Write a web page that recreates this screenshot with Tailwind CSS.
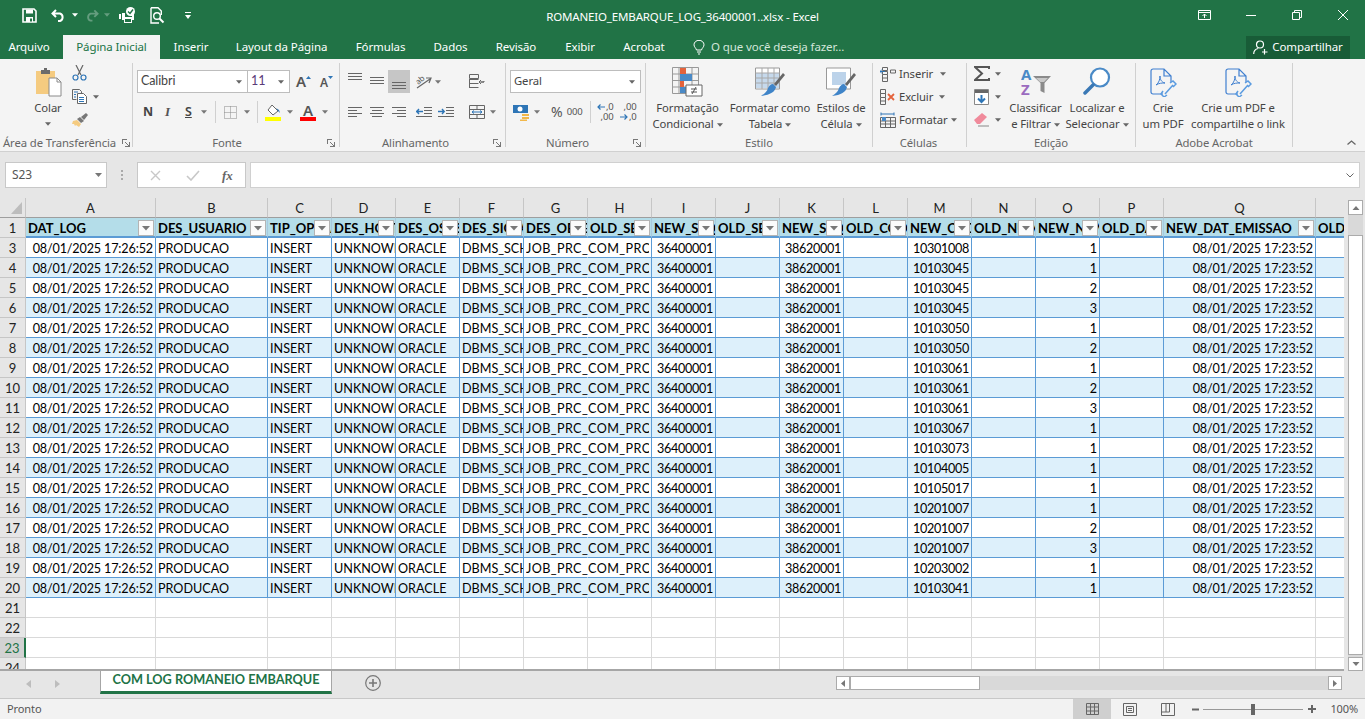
<!DOCTYPE html>
<html lang="pt-BR">
<head>
<meta charset="utf-8">
<title>ROMANEIO_EMBARQUE_LOG_36400001..xlsx - Excel</title>
<script src="https://cdn.jsdelivr.net/npm/@tailwindcss/browser@4"></script>
</head>
<body class="w-[1365px] h-[719px] overflow-hidden bg-[#e6e6e6] font-['Noto_Sans',sans-serif] text-[11.3px] tracking-[-0.1px] text-[#444]">
<svg class="hidden"><symbol id="c" viewBox="0 0 7 4"><path d="M0 0h7L3.5 4z"/></symbol><symbol id="l" viewBox="0 0 8 8"><path d="M0 .5h5M.5 0v5M7.5 3v5M3 7.5h5M3 3l4 4" fill="none" stroke="#777"/></symbol><symbol id="f" viewBox="0 0 16 16"><rect x=".5" y=".5" width="15" height="15" fill="#fbfbfb" stroke="#b4b4b4"/><path d="M4 6h8l-4 4.500z" fill="#777"/></symbol></svg>

<!-- title bar -->
<header class="h-[59px] bg-[#217346] text-white flex flex-col">
  <div class="h-[35px] grid grid-cols-[1fr_auto_1fr] items-center">
    <div class="flex items-center pl-[22px] pb-[5px]">
      <svg class="w-[15px] h-[15px]" viewBox="0 0 15 15"><path d="M1 1h11l2 2v11H1z" fill="none" stroke="#fff" stroke-width="1.6"/><path d="M4 1.500h7v4H4zM4 9h7v5H4z" fill="#fff"/><path d="M8 10.500h2v3H8z" fill="#217346"/></svg>
      <svg class="w-[16px] h-[13px] ml-[14px]" viewBox="0 0 16 13"><path d="M5 1 1.500 4.500 5 8M2 4.500h7a4 4 0 0 1 0 7.500H7" fill="none" stroke="#fff" stroke-width="2"/></svg>
      <svg class="w-[6px] h-[4px] ml-[5px] fill-white"><use href="#c"/></svg>
      <svg class="w-[15px] h-[13px] ml-[6px] opacity-30" viewBox="0 0 16 13"><path d="M11 1l3.500 3.500L11 8M14 4.500H7a4 4 0 0 0 0 7.500h2" fill="none" stroke="#fff" stroke-width="2"/></svg>
      <svg class="w-[6px] h-[4px] ml-[5px] fill-white opacity-30"><use href="#c"/></svg>
      <svg class="w-[17px] h-[17px] ml-[9px]" viewBox="0 0 17 17"><path d="M3 6h3v3h6V6h3v7h-2v3H5v-3H3zM0 7h2v5H0z" fill="#fff"/><path d="M6 9h7v1H6zM6 12h6v3H6z" fill="#217346"/><circle cx="11.500" cy="4.500" r="4.500" fill="#fff"/><path d="M9 4.500l2 2 3-4" fill="none" stroke="#217346" stroke-width="1.400"/></svg>
      <svg class="w-[15px] h-[17px] ml-[14px]" viewBox="0 0 15 17"><path d="M1 .7h7l3.300 3.300v4M1 .7v15.300h8" fill="none" stroke="#fff" stroke-width="1.400"/><circle cx="7" cy="9" r="3.300" fill="none" stroke="#fff" stroke-width="1.400"/><path d="M9.500 11.500l4 4" stroke="#fff" stroke-width="2"/></svg>
      <svg class="w-[6px] h-[7px] ml-[20px]" viewBox="0 0 6 7"><path d="M0 0h6v1H0z" fill="#fff"/><path d="M0 3h6L3 7z" fill="#fff"/></svg>
    </div>
    <div class="text-[11.500px] tracking-[-0.15px] leading-none pb-[2px] whitespace-nowrap">ROMANEIO_EMBARQUE_LOG_36400001..xlsx - Excel</div>
    <div class="flex justify-end items-center pr-[17px] pb-[5px]">
      <svg class="w-[13px] h-[10px]" viewBox="0 0 13 10"><path d="M.5.500h12v9H.5zM.5 2.500h12" fill="none" stroke="#fff"/><path d="M6.500 8V4M4.500 6l2-2 2 2" fill="none" stroke="#fff"/></svg>
      <svg class="w-[10px] h-[10px] ml-[35px]" viewBox="0 0 10 10"><path d="M0 5.500h10" stroke="#fff"/></svg>
      <svg class="w-[10px] h-[10px] ml-[36px]" viewBox="0 0 10 10"><path d="M.5 2.500h7v7h-7zM2.500 2.500v-2h7v7h-2" fill="none" stroke="#fff"/></svg>
      <svg class="w-[10px] h-[10px] ml-[36px]" viewBox="0 0 10 10"><path d="M0 0l10 10M10 0L0 10" stroke="#fff"/></svg>
    </div>
  </div>
  <nav class="h-[24px] flex items-center text-[11.500px] text-center relative">
    <div class="w-[63px] pr-[5px] leading-[24px]">Arquivo</div>
    <div class="w-[97px] h-[24px] leading-[24px] bg-[#f3f3f3] text-[#217346]">Página Inicial</div>
    <div class="w-[62px]">Inserir</div>
    <div class="w-[119px]">Layout da Página</div>
    <div class="w-[79px]">Fórmulas</div>
    <div class="w-[61px]">Dados</div>
    <div class="w-[70px]">Revisão</div>
    <div class="w-[58px]">Exibir</div>
    <div class="w-[70px]">Acrobat</div>
    <svg class="w-[12px] h-[15px] ml-[14px]" viewBox="0 0 12 15"><path d="M3.500 10C3 8 1 7 1 4.800a5 4.500 0 0 1 10 0C11 7 9 8 8.500 10zM4 12h4M5 14h2" fill="none" stroke="#fff"/></svg>
    <div class="ml-[6px] text-[#d3e6da]">O que você deseja fazer...</div>
    <div class="ml-auto mr-[15px] w-[104px] h-[23px] bg-[#185c37] flex items-center justify-center gap-[4px]">
      <svg class="w-[15px] h-[15px]" viewBox="0 0 15 15"><circle cx="7" cy="4.500" r="3.500" fill="none" stroke="#fff" stroke-width="1.200"/><path d="M.7 14c0-3 2-5 4.500-5.500M11.500 9v5.500M9 12h5.500" fill="none" stroke="#fff" stroke-width="1.200"/></svg>
      <span>Compartilhar</span>
    </div>
  </nav>
</header>

<!-- ribbon -->
<section class="h-[93px] bg-[#f4f4f4] border-b border-[#d0d0d0] flex relative">
  <!-- Clipboard -->
  <div class="w-[132px] flex flex-col">
    <div class="flex-1 flex pl-[33px]">
      <div class="w-[30px] flex flex-col items-center pt-[8px]">
        <svg class="w-[30px] h-[30px]" viewBox="0 0 30 30"><path d="M3 4h19v23H3z" fill="#f5cb80"/><path d="M8 3h3V1h3v2h3v4H8z" fill="#6b6b6b"/><path d="M16 11h8l4 4v14H16z" fill="#fff" stroke="#8a8a8a"/><path d="M24 11v4h4" fill="none" stroke="#8a8a8a"/></svg>
        <div class="mt-[3px] leading-[16px]">Colar</div>
        <svg class="w-[6px] h-[4px] mt-[6px] fill-[#666]"><use href="#c"/></svg>
      </div>
      <div class="ml-[9px] flex flex-col pt-[6px]">
        <svg class="w-[15px] h-[16px]" viewBox="0 0 15 16"><path d="M4 0l5 10M11 0L6 10" stroke="#666" stroke-width="1.200"/><circle cx="3.500" cy="12.500" r="2.500" fill="none" stroke="#2e75b6" stroke-width="1.200"/><circle cx="11.500" cy="12.500" r="2.500" fill="none" stroke="#2e75b6" stroke-width="1.200"/></svg>
        <div class="flex items-center mt-[8px]">
          <svg class="w-[15px] h-[15px]" viewBox="0 0 15 15"><path d="M.5.500h7l2 2v2M.5.500v10h4" fill="none" stroke="#666"/><path d="M5.500 4.500h6l3 3v7h-9z" fill="#fff" stroke="#666"/><path d="M2 3h4M2 5.500h2M2 8h2M7 8.500h5M7 10.500h5M7 12.500h5" stroke="#2e75b6"/></svg>
          <svg class="w-[6px] h-[4px] ml-[6px] fill-[#666]"><use href="#c"/></svg>
        </div>
        <svg class="w-[16px] h-[15px] mt-[8px]" viewBox="0 0 16 15"><path d="M1 9l4-1 4 4-2 3-3-2-1 1-1-2H0z" fill="#f5cb80"/><path d="M5 7l3-2 4 4-3 2z" fill="#777"/><path d="M9 5l5-4 2 2-4 5z" fill="#777"/></svg>
      </div>
    </div>
    <div class="h-[17px] leading-[18px] flex text-[#666] pl-[3px] whitespace-nowrap">Área de Transferência<svg class="w-[8px] h-[8px] ml-[6px] mt-[5px]"><use href="#l"/></svg></div>
  </div>
  <div class="w-px h-[84px] mt-[4px] bg-[#d0d0d0]"></div>
  <!-- Font -->
  <div class="w-[206px] flex flex-col">
    <div class="flex-1 pl-[4px] pt-[11px]">
      <div class="flex items-center">
        <div class="w-[111px] h-[23px] bg-white border border-[#bdbdbd] flex items-center pl-[3px] font-['Lato',sans-serif] text-[12.500px] text-[#444]">Calibri<svg class="w-[6px] h-[4px] ml-auto mr-[5px] fill-[#666]"><use href="#c"/></svg></div>
        <div class="w-[42px] h-[23px] bg-white border border-[#bdbdbd] border-l-0 flex items-center pl-[3px] font-['Lato',sans-serif] text-[12.500px] text-[#5a3a78]">11<svg class="w-[6px] h-[4px] ml-auto mr-[5px] fill-[#666]"><use href="#c"/></svg></div>
        <div class="ml-[6px] flex items-start w-[16px] text-[15px] leading-none text-[#555] font-semibold">A<svg class="w-[5px] h-[3px] mt-[2px] fill-[#2e75b6] rotate-180"><use href="#c"/></svg></div>
        <div class="ml-[8px] flex items-start w-[14px] text-[12px] leading-none text-[#555] font-semibold pt-[3px]">A<svg class="w-[5px] h-[3px] -mt-[1px] fill-[#2e75b6]"><use href="#c"/></svg></div>
      </div>
      <div class="flex items-center mt-[7px] h-[24px]">
        <span class="ml-[6px] w-[10px] font-bold text-[12.500px] text-[#444]">N</span>
        <span class="ml-[12px] w-[8px] italic text-[13px] font-['Liberation_Serif',serif] font-bold text-[#555]">I</span>
        <span class="ml-[12px] w-[10px] underline text-[12.500px] font-semibold text-[#444]">S</span>
        <svg class="w-[6px] h-[4px] ml-[6px] fill-[#777]"><use href="#c"/></svg>
        <div class="w-px h-[22px] bg-[#d0d0d0] ml-[8px]"></div>
        <svg class="w-[13px] h-[13px] ml-[8px]" viewBox="0 0 13 13"><path d="M.5.500h12v12H.5zM6.500.500v12M.5 6.500h12" fill="none" stroke="#888" stroke-dasharray="1 1"/></svg>
        <svg class="w-[6px] h-[4px] ml-[7px] fill-[#777]"><use href="#c"/></svg>
        <div class="w-px h-[22px] bg-[#d0d0d0] ml-[7px]"></div>
        <svg class="w-[16px] h-[17px] ml-[7px]" viewBox="0 0 16 17"><path d="M7 1l6 6-5 4-5-5z" fill="#fff" stroke="#666"/><path d="M11 4l3 2 1 3-2-2z" fill="#2e75b6"/><path d="M0 13h16v4H0z" fill="#ffff00"/></svg>
        <svg class="w-[6px] h-[4px] ml-[6px] fill-[#777]"><use href="#c"/></svg>
        <div class="ml-[7px] w-[16px] flex flex-col items-center leading-[13px] text-[15px] font-semibold text-[#555]">A<div class="w-[16px] h-[4px] bg-[#ff0000]"></div></div>
        <svg class="w-[6px] h-[4px] ml-[6px] fill-[#777]"><use href="#c"/></svg>
      </div>
    </div>
    <div class="h-[17px] leading-[18px] text-[#666] relative text-center pr-[18px]">Fonte<svg class="absolute right-[4px] top-[5px] w-[8px] h-[8px]"><use href="#l"/></svg></div>
  </div>
  <div class="w-px h-[84px] mt-[4px] bg-[#d0d0d0]"></div>
  <!-- Align -->
  <div class="w-[165px] flex flex-col">
    <div class="flex-1 pl-[8px] pt-[11px] relative">
      <div class="flex items-center h-[23px]">
        <svg class="w-[14px] h-[9px] mb-[8px]" viewBox="0 0 14 9"><path d="M0 .5h14M0 3.500h14M0 6.500h14" stroke="#666"/></svg>
        <svg class="w-[14px] h-[9px] ml-[8px]" viewBox="0 0 14 9"><path d="M0 .5h14M0 3.500h14M0 6.500h14" stroke="#666"/></svg>
        <div class="w-[22px] h-[23px] bg-[#c6c6c6] ml-[4px] flex items-end justify-center pb-[3px]"><svg class="w-[14px] h-[9px]" viewBox="0 0 14 9"><path d="M0 1.500h14M0 4.500h14M0 7.500h14" stroke="#666"/></svg></div>
        <svg class="w-[16px] h-[15px] ml-[6px]" viewBox="0 0 16 15"><path d="M1 14L14 5M10 4l5 0-2 5" fill="none" stroke="#666" stroke-width="1.200"/><text x="0" y="9" font-size="8" fill="#555" transform="rotate(-40 4 7)">ab</text></svg>
        <svg class="w-[6px] h-[4px] ml-[3px] fill-[#777]"><use href="#c"/></svg>
        <svg class="w-[16px] h-[15px] ml-[28px]" viewBox="0 0 16 15"><path d="M.5.500h9v4H.5zM.5 5.500h9M.5 9.500h9M.5 13.500h9M.5 5v9M12 8h3v-1M15 8h-4M12 6l-2 2 2 2" fill="none" stroke="#666"/></svg>
      </div>
      <div class="flex items-center mt-[7px] h-[24px]">
        <svg class="w-[14px] h-[11px]" viewBox="0 0 14 11"><path d="M0 .5h14M0 3.500h9M0 6.500h14M0 9.500h9" stroke="#666"/></svg>
        <svg class="w-[14px] h-[11px] ml-[8px]" viewBox="0 0 14 11"><path d="M0 .5h14M2 3.500h10M0 6.500h14M2 9.500h10" stroke="#666"/></svg>
        <svg class="w-[14px] h-[11px] ml-[8px]" viewBox="0 0 14 11"><path d="M0 .5h14M5 3.500h9M0 6.500h14M5 9.500h9" stroke="#666"/></svg>
        <svg class="w-[16px] h-[11px] ml-[10px]" viewBox="0 0 16 11"><path d="M8 .5h8M8 3.500h8M8 6.500h8M0 9.500h16" stroke="#666"/><path d="M0 4.500h7M3 2L.8 4.500 3 7" fill="none" stroke="#2e75b6" stroke-width="1.400"/></svg>
        <svg class="w-[16px] h-[11px] ml-[6px]" viewBox="0 0 16 11"><path d="M8 .5h8M8 3.500h8M8 6.500h8M0 9.500h16" stroke="#666"/><path d="M0 4.500h6M4 2l2.200 2.500L4 7" fill="none" stroke="#2e75b6" stroke-width="1.400"/></svg>
        <svg class="w-[16px] h-[14px] ml-[15px]" viewBox="0 0 16 14"><path d="M.5.500h15v13H.5zM.5 4.500h15M.5 9.500h15M8 .5v4M8 9.500v4" fill="none" stroke="#666"/><path d="M3 7h10M5 5.500L3 7l2 1.500M11 5.500L13 7l-2 1.500" fill="none" stroke="#2e75b6"/></svg>
        <svg class="w-[6px] h-[4px] ml-[5px] fill-[#777]"><use href="#c"/></svg>
      </div>
    </div>
    <div class="h-[17px] leading-[18px] text-[#666] relative text-center pl-[3px] pr-[17px]">Alinhamento<svg class="absolute right-[4px] top-[5px] w-[8px] h-[8px]"><use href="#l"/></svg></div>
  </div>
  <div class="w-px h-[84px] mt-[4px] bg-[#d0d0d0]"></div>
  <!-- Number -->
  <div class="w-[139px] flex flex-col">
    <div class="flex-1 pl-[4px] pt-[11px]">
      <div class="w-[131px] h-[23px] bg-white border border-[#bdbdbd] flex items-center pl-[3px]">Geral<svg class="w-[6px] h-[4px] ml-auto mr-[5px] fill-[#666]"><use href="#c"/></svg></div>
      <div class="flex items-center mt-[7px] h-[24px]">
        <svg class="w-[17px] h-[17px] ml-[3px]" viewBox="0 0 17 17"><path d="M0 1h15v8H0z" fill="#2e75b6"/><circle cx="7" cy="5" r="2.500" fill="#fff"/><path d="M9 10h7v2H9zM9 13h7v2H9z M7 15.500h7v1.500H7z" fill="#f2b84b"/></svg>
        <svg class="w-[6px] h-[4px] ml-[4px] fill-[#777]"><use href="#c"/></svg>
        <span class="ml-[11px] text-[14px] leading-none text-[#555] tracking-normal">%</span>
        <span class="ml-[4px] text-[9.500px] leading-none text-[#555]">000</span>
        <div class="w-px h-[22px] bg-[#d0d0d0] ml-[7px]"></div>
        <div class="ml-[6px] w-[17px] text-[9.500px] leading-[10px] text-[#555] flex flex-col whitespace-nowrap">
          <div class="flex items-center justify-end"><svg class="w-[8px] h-[6px] mr-[1px]" viewBox="0 0 8 6"><path d="M8 3H1M3.500.5L1 3l2.500 2.500" fill="none" stroke="#2e75b6" stroke-width="1.200"/></svg>,0</div>
          <div class="text-right">,00</div>
        </div>
        <div class="ml-[6px] w-[17px] text-[9.500px] leading-[10px] text-[#555] flex flex-col whitespace-nowrap">
          <div class="text-right">,00</div>
          <div class="flex items-center justify-end"><svg class="w-[8px] h-[6px] mr-[1px]" viewBox="0 0 8 6"><path d="M0 3h7M4.500.5L7 3 4.500 5.500" fill="none" stroke="#2e75b6" stroke-width="1.200"/></svg>,0</div>
        </div>
      </div>
    </div>
    <div class="h-[17px] leading-[18px] text-[#666] relative text-center pr-[16px]">Número<svg class="absolute right-[4px] top-[5px] w-[8px] h-[8px]"><use href="#l"/></svg></div>
  </div>
  <div class="w-px h-[84px] mt-[4px] bg-[#d0d0d0]"></div>
  <!-- Styles -->
  <div class="w-[226px] flex flex-col">
    <div class="flex-1 flex text-center whitespace-nowrap">
      <div class="w-[83px] flex flex-col items-center pt-[8px]">
        <svg class="w-[31px] h-[30px]" viewBox="0 0 31 30"><path d="M.5.500h26v26H.5zM.5 7h26M.5 13.500h26M.5 20h26M7 .5v26M20 .5v26" fill="none" stroke="#999"/><path d="M8 1h6v6H8zM8 14h4v6H8z" fill="#e4633c"/><path d="M8 7h12v7H8zM8 20h6v6H8z" fill="#4a8ac7"/><path d="M14 18h16v11H14z" fill="#fff" stroke="#666"/><path d="M19 22h6M19 25h6M24 20l-4 7" stroke="#555"/></svg>
        <div class="mt-[3px] leading-[16px]">Formatação<br>Condicional<svg class="inline w-[6px] h-[4px] ml-[3px] fill-[#666]"><use href="#c"/></svg></div>
      </div>
      <div class="w-[82px] flex flex-col items-center pt-[8px]">
        <svg class="w-[30px] h-[30px]" viewBox="0 0 30 30"><path d="M.5 1h24v21H.5z" fill="#fff" stroke="#999"/><path d="M1 6h23v15H1z" fill="#c6d9ec"/><path d="M.5 6h24M.5 11h24M.5 16h24M7 1v21M13 1v21M19 1v21" fill="none" stroke="#a8a8a8"/><path d="M28 6l2 2-9 11-2-2z" fill="#666"/><path d="M18 17l3 3c-1 5-6 8-15 9 3-2 6-4 7-8 1-2 3-4 5-4z" fill="#3f84c8"/></svg>
        <div class="mt-[3px] leading-[16px]">Formatar como<br>Tabela<svg class="inline w-[6px] h-[4px] ml-[3px] fill-[#666]"><use href="#c"/></svg></div>
      </div>
      <div class="w-[60px] flex flex-col items-center pt-[8px]">
        <svg class="w-[30px] h-[30px]" viewBox="0 0 30 30"><path d="M.5 1h24v21H.5z" fill="#fff" stroke="#999"/><path d="M6 5h14v13H6z" fill="#bcd3ea"/><path d="M28 6l2 2-9 11-2-2z" fill="#666"/><path d="M18 17l3 3c-1 5-6 8-15 9 3-2 6-4 7-8 1-2 3-4 5-4z" fill="#3f84c8"/></svg>
        <div class="mt-[3px] leading-[16px]">Estilos de<br>Célula<svg class="inline w-[6px] h-[4px] ml-[3px] fill-[#666]"><use href="#c"/></svg></div>
      </div>
    </div>
    <div class="h-[17px] leading-[18px] text-[#666] text-center">Estilo</div>
  </div>
  <div class="w-px h-[84px] mt-[4px] bg-[#d0d0d0]"></div>
  <!-- Cells -->
  <div class="w-[93px] flex flex-col">
    <div class="flex-1 pl-[7px] pt-[7px] flex flex-col gap-[7px]">
      <div class="flex items-center h-[16px]"><svg class="w-[16px] h-[16px]" viewBox="0 0 16 16"><path d="M2.500 5.500h5v3h-5zM2.500 8.500v7h5v-7M2.500 12h5M2.500 1.500h5v3h-5zM10.500 4h5v3h-5z" fill="none" stroke="#666"/><path d="M0 5.500h5M2 3.500l-2 2 2 2" fill="none" stroke="#2e75b6"/></svg><span class="ml-[3px]">Inserir</span><svg class="w-[6px] h-[4px] ml-[7px] fill-[#666]"><use href="#c"/></svg></div>
      <div class="flex items-center h-[16px]"><svg class="w-[16px] h-[16px]" viewBox="0 0 16 16"><path d="M.5.500h5v4h-5zM.5 4.500h5v4h-5zM.5 8.500v7h5v-7M.5 12h5" fill="none" stroke="#666"/><path d="M8 5l6 6M14 5l-6 6" stroke="#e4633c" stroke-width="1.800"/></svg><span class="ml-[3px]">Excluir</span><svg class="w-[6px] h-[4px] ml-[6px] fill-[#666]"><use href="#c"/></svg></div>
      <div class="flex items-center h-[16px]"><svg class="w-[16px] h-[16px]" viewBox="0 0 16 16"><path d="M.5 5.500h15v10H.5zM.5 9h15M.5 12h15M5.500 5v10M10.500 5v10" fill="none" stroke="#666"/><path d="M2 5h4V9H2z" fill="#4a8ac7"/><path d="M1 2h13M1 .5v3M14 .5v3" stroke="#2e75b6"/></svg><span class="ml-[3px]">Formatar</span><svg class="w-[6px] h-[4px] ml-[3px] fill-[#666]"><use href="#c"/></svg></div>
    </div>
    <div class="h-[17px] leading-[18px] text-[#666] text-center pr-[2px]">Células</div>
  </div>
  <div class="w-px h-[84px] mt-[4px] bg-[#d0d0d0]"></div>
  <!-- Edit -->
  <div class="w-[168px] flex flex-col">
    <div class="flex-1 flex text-center whitespace-nowrap">
      <div class="w-[38px] pl-[7px] pt-[6px] flex flex-col gap-[6px]">
        <div class="flex items-center h-[17px]"><svg class="w-[16px] h-[15px]" viewBox="0 0 16 15"><path d="M15 3V1H1l7 6.500L1 14h14v-2" fill="none" stroke="#555" stroke-width="2"/></svg><svg class="w-[6px] h-[4px] ml-[5px] fill-[#666]"><use href="#c"/></svg></div>
        <div class="flex items-center h-[17px]"><svg class="w-[15px] h-[16px]" viewBox="0 0 15 16"><path d="M.5.500h14v15H.5z" fill="#fff" stroke="#888"/><path d="M1 1h13v3H1z" fill="#666"/><path d="M7.500 6v7M4 9.500l3.500 3.500L11 9.500" fill="none" stroke="#2e75b6" stroke-width="2"/></svg><svg class="w-[6px] h-[4px] ml-[6px] fill-[#666]"><use href="#c"/></svg></div>
        <div class="flex items-center h-[17px]"><svg class="w-[15px] h-[15px]" viewBox="0 0 15 15"><path d="M0 8l8-7 5 4-7 7H3z" fill="#f08a9b"/><path d="M4 14h11" stroke="#888"/></svg><svg class="w-[6px] h-[4px] ml-[6px] fill-[#666]"><use href="#c"/></svg></div>
      </div>
      <div class="w-[61px] flex flex-col items-center pt-[8px]">
        <svg class="w-[30px] h-[30px]" viewBox="0 0 30 30"><text x="0" y="13" font-size="15" font-weight="700" font-family="Noto Sans, sans-serif" fill="#4a8ac7">A</text><text x="0" y="28" font-size="15" font-weight="700" font-family="Noto Sans, sans-serif" fill="#9b6bbf">Z</text><path d="M12 9h18l-6.500 7v10l-4-2v-8z" fill="#8a8a8a"/><path d="M15 11h12l-4 4h-4z" fill="#c8c8c8"/></svg>
        <div class="mt-[3px] leading-[16px]">Classificar<br>e Filtrar<svg class="inline w-[6px] h-[4px] ml-[3px] fill-[#666]"><use href="#c"/></svg></div>
      </div>
      <div class="w-[62px] flex flex-col items-center pt-[8px]">
        <svg class="w-[28px] h-[28px]" viewBox="0 0 28 28"><circle cx="17" cy="10.500" r="9" fill="#fff" stroke="#4a8ac7" stroke-width="2.200"/><path d="M10 18l-8 8" stroke="#3a78b5" stroke-width="3.500" stroke-linecap="round"/></svg>
        <div class="mt-[5px] leading-[16px]">Localizar e<br>Selecionar<svg class="inline w-[6px] h-[4px] ml-[3px] fill-[#666]"><use href="#c"/></svg></div>
      </div>
    </div>
    <div class="h-[17px] leading-[18px] text-[#666] text-center">Edição</div>
  </div>
  <div class="w-px h-[84px] mt-[4px] bg-[#d0d0d0]"></div>
  <!-- Acrobat -->
  <div class="w-[156px] flex flex-col">
    <div class="flex-1 flex text-center whitespace-nowrap">
      <div class="w-[54px] flex flex-col items-center pt-[9px]">
        <svg class="w-[27px] h-[29px]" viewBox="0 0 27 29"><path d="M13 26H3a2 2 0 0 1-2-2V3a2 2 0 0 1 2-2h11l7 7v6M14 1v7h7" fill="none" stroke="#3f7fd0" stroke-width="1.200"/><path d="M6 17c3-2 4-6 4-9 0 3 1 6 5 7-3 0-6 0-9 2z" fill="none" stroke="#3f7fd0"/><path d="M15 26l8-9M20 15l3-2 3 3-3 3M13 23l-2 3 3 3 3-2" fill="none" stroke="#5a9be0" stroke-width="1.500"/></svg>
        <div class="mt-[3px] leading-[16px]">Crie<br>um PDF</div>
      </div>
      <div class="w-[96px] flex flex-col items-center pt-[9px]">
        <svg class="w-[27px] h-[29px]" viewBox="0 0 27 29"><path d="M13 26H3a2 2 0 0 1-2-2V3a2 2 0 0 1 2-2h11l7 7v6M14 1v7h7" fill="none" stroke="#3f7fd0" stroke-width="1.200"/><path d="M6 17c3-2 4-6 4-9 0 3 1 6 5 7-3 0-6 0-9 2z" fill="none" stroke="#3f7fd0"/><path d="M15 26l8-9M20 15l3-2 3 3-3 3M13 23l-2 3 3 3 3-2" fill="none" stroke="#5a9be0" stroke-width="1.500"/></svg>
        <div class="mt-[3px] leading-[16px]">Crie um PDF e<br>compartilhe o link</div>
      </div>
    </div>
    <div class="h-[17px] leading-[18px] text-[#666] text-center">Adobe Acrobat</div>
  </div>
  <div class="w-px h-[84px] mt-[4px] bg-[#d0d0d0]"></div>
  <svg class="absolute left-[1347px] top-[81px] w-[9px] h-[5px]" viewBox="0 0 9 5"><path d="M.5 4.500l4-3.500 4 3.500" fill="none" stroke="#666" stroke-width="1.300"/></svg>
</section>

<!-- formula bar -->
<section class="h-[46px] bg-[#e6e6e6] flex pt-[10px] pl-[5px] pr-[5px] font-['Noto_Sans',sans-serif]">
  <div class="w-[102px] h-[26px] bg-white border border-[#c8c8c8] flex items-center pl-[6px] text-[12px] text-[#555]">S23<svg class="w-[7px] h-[4px] ml-auto mr-[4px] fill-[#777]"><use href="#c"/></svg></div>
  <div class="w-[30px] h-[26px] flex justify-center items-center"><div class="w-[2px] h-[10px] border-l-2 border-dotted border-[#aaa]"></div></div>
  <div class="w-[109px] h-[26px] bg-white border border-[#c8c8c8] flex items-center pl-[12px]">
    <svg class="w-[11px] h-[11px]" viewBox="0 0 11 11"><path d="M1 1l9 9M10 1L1 10" stroke="#c8c8c8" stroke-width="1.400"/></svg>
    <svg class="w-[14px] h-[11px] ml-[25px]" viewBox="0 0 14 11"><path d="M1 6l4 4 8-9" fill="none" stroke="#c8c8c8" stroke-width="1.600"/></svg>
    <span class="ml-[22px] font-['Liberation_Serif',serif] italic font-bold text-[13px] text-[#666] leading-none">fx</span>
  </div>
  <div class="w-[1110px] ml-[4px] h-[26px] bg-white border border-[#d0d0d0] flex items-center justify-end pr-[5px]"><svg class="w-[8px] h-[5px]" viewBox="0 0 8 5"><path d="M.5.500l3.500 3.500 3.500-3.500" fill="none" stroke="#666"/></svg></div>
</section>

<!-- sheet -->
<main class="h-[473px] flex">
  <div class="w-[1344px] h-[473px] overflow-hidden bg-white border-b-2 border-[#a6a6a6] relative">
    <table class="table-fixed border-separate border-spacing-0 w-[1372px] font-['Lato',sans-serif] text-[12.600px] tracking-normal text-black [&_td]:h-[20px] [&_td]:p-0 [&_td]:pl-[2px] [&_td]:pr-[2px] [&_td]:pt-[3px] [&_td]:overflow-hidden [&_td]:whitespace-nowrap [&_td]:border-r [&_td]:border-b [&_td]:leading-none [&_tbody_th]:h-[20px] [&_tbody_th]:p-0 [&_tbody_th]:pt-[2px] [&_tbody_th]:leading-none [&_tbody_th]:bg-[#e6e6e6] [&_tbody_th]:font-normal [&_tbody_th]:text-[13px] [&_tbody_th]:border-r [&_tbody_th]:border-b [&_tbody_th]:border-[#c6c6c6] [&_tbody_th]:text-[#222]">
      <colgroup><col class="w-[26px]"><col class="w-[130px]"><col class="w-[112px]"><col class="w-[64px]"><col class="w-[64px]"><col class="w-[64px]"><col class="w-[64px]"><col class="w-[64px]"><col class="w-[64px]"><col class="w-[64px]"><col class="w-[64px]"><col class="w-[64px]"><col class="w-[64px]"><col class="w-[64px]"><col class="w-[64px]"><col class="w-[64px]"><col class="w-[64px]"><col class="w-[152px]"><col class="w-[64px]"></colgroup>
      <thead class="[&_th]:h-[20px] [&_th]:p-0 [&_th]:pt-[2px] [&_th]:leading-none [&_th]:bg-[#e6e6e6] [&_th]:font-normal [&_th]:text-[13px] [&_th]:border-r [&_th]:border-b [&_th]:border-[#c6c6c6] [&_th]:border-b-[#9e9e9e] [&_th]:text-[#222]">
        <tr><th class="relative"><svg class="absolute right-[3px] bottom-[3px] w-[11px] h-[12px]" viewBox="0 0 11 12"><path d="M11 0v12H0z" fill="#bdbdbd"/></svg></th><th>A</th><th>B</th><th>C</th><th>D</th><th>E</th><th>F</th><th>G</th><th>H</th><th>I</th><th>J</th><th>K</th><th>L</th><th>M</th><th>N</th><th>O</th><th>P</th><th>Q</th><th></th></tr>
      </thead>
      <tbody class="[&_.h_td]:bg-[#b4dde9] [&_.h_td]:relative [&_.h_td]:font-bold [&_.h_td]:text-[13px] [&_.h_td]:border-r-[#a9c9de] [&_.h_td]:border-b-2 [&_.h_td]:border-b-[#5b9bd5] [&_.h_td>svg]:absolute [&_.h_td>svg]:right-[1px] [&_.h_td>svg]:top-[2px] [&_.h_td>svg]:w-[16px] [&_.h_td>svg]:h-[16px] [&_.d_td]:border-[#5b9bd5] [&_.b]:bg-[#ddf0fb] [&_.e_td]:border-[#d9d9d9] [&_.d_td:nth-child(2)]:text-right [&_.d_td:nth-child(2)]:tracking-[-0.15px] [&_.d_td:nth-child(10)]:text-right [&_.d_td:nth-child(10)]:tracking-[-0.3px] [&_.d_td:nth-child(12)]:text-right [&_.d_td:nth-child(12)]:tracking-[-0.3px] [&_.d_td:nth-child(14)]:text-right [&_.d_td:nth-child(14)]:tracking-[-0.3px] [&_.d_td:nth-child(16)]:text-right [&_.d_td:nth-child(18)]:text-right [&_.d_td:nth-child(18)]:tracking-[-0.15px]">
        <tr class="h"><th>1</th>
          <td>DAT_LOG<svg viewBox="0 0 16 16"><use href="#f"/></svg></td><td>DES_USUARIO<svg viewBox="0 0 16 16"><use href="#f"/></svg></td><td>TIP_OPERACAO<svg viewBox="0 0 16 16"><use href="#f"/></svg></td><td>DES_HOST<svg viewBox="0 0 16 16"><use href="#f"/></svg></td><td>DES_OSUSER<svg viewBox="0 0 16 16"><use href="#f"/></svg></td><td>DES_SIGLA<svg viewBox="0 0 16 16"><use href="#f"/></svg></td><td>DES_OBJETO<svg viewBox="0 0 16 16"><use href="#f"/></svg></td><td>OLD_SEQ<svg viewBox="0 0 16 16"><use href="#f"/></svg></td><td>NEW_SEQ<svg viewBox="0 0 16 16"><use href="#f"/></svg></td><td>OLD_SEQ<svg viewBox="0 0 16 16"><use href="#f"/></svg></td><td>NEW_SEQ<svg viewBox="0 0 16 16"><use href="#f"/></svg></td><td>OLD_COD<svg viewBox="0 0 16 16"><use href="#f"/></svg></td><td>NEW_COD<svg viewBox="0 0 16 16"><use href="#f"/></svg></td><td>OLD_NUM<svg viewBox="0 0 16 16"><use href="#f"/></svg></td><td>NEW_NUM<svg viewBox="0 0 16 16"><use href="#f"/></svg></td><td>OLD_DAT<svg viewBox="0 0 16 16"><use href="#f"/></svg></td><td>NEW_DAT_EMISSAO<svg viewBox="0 0 16 16"><use href="#f"/></svg></td><td>OLD_DAT</td>
        </tr>
        <tr class="d"><th>3</th><td>08/01/2025 17:26:52</td><td>PRODUCAO</td><td>INSERT</td><td>UNKNOWN</td><td>ORACLE</td><td>DBMS_SCHEDULER</td><td class="!overflow-visible !border-r-transparent"><div class="w-[123px] overflow-hidden tracking-[0.4px]">JOB_PRC_COM_PROCESSA</div></td><td></td><td>36400001</td><td></td><td>38620001</td><td></td><td>10301008</td><td></td><td>1</td><td></td><td>08/01/2025 17:23:52</td><td></td></tr>
        <tr class="d b"><th>4</th><td>08/01/2025 17:26:52</td><td>PRODUCAO</td><td>INSERT</td><td>UNKNOWN</td><td>ORACLE</td><td>DBMS_SCHEDULER</td><td class="!overflow-visible !border-r-transparent"><div class="w-[123px] overflow-hidden tracking-[0.4px]">JOB_PRC_COM_PROCESSA</div></td><td></td><td>36400001</td><td></td><td>38620001</td><td></td><td>10103045</td><td></td><td>1</td><td></td><td>08/01/2025 17:23:52</td><td></td></tr>
        <tr class="d"><th>5</th><td>08/01/2025 17:26:52</td><td>PRODUCAO</td><td>INSERT</td><td>UNKNOWN</td><td>ORACLE</td><td>DBMS_SCHEDULER</td><td class="!overflow-visible !border-r-transparent"><div class="w-[123px] overflow-hidden tracking-[0.4px]">JOB_PRC_COM_PROCESSA</div></td><td></td><td>36400001</td><td></td><td>38620001</td><td></td><td>10103045</td><td></td><td>2</td><td></td><td>08/01/2025 17:23:52</td><td></td></tr>
        <tr class="d b"><th>6</th><td>08/01/2025 17:26:52</td><td>PRODUCAO</td><td>INSERT</td><td>UNKNOWN</td><td>ORACLE</td><td>DBMS_SCHEDULER</td><td class="!overflow-visible !border-r-transparent"><div class="w-[123px] overflow-hidden tracking-[0.4px]">JOB_PRC_COM_PROCESSA</div></td><td></td><td>36400001</td><td></td><td>38620001</td><td></td><td>10103045</td><td></td><td>3</td><td></td><td>08/01/2025 17:23:52</td><td></td></tr>
        <tr class="d"><th>7</th><td>08/01/2025 17:26:52</td><td>PRODUCAO</td><td>INSERT</td><td>UNKNOWN</td><td>ORACLE</td><td>DBMS_SCHEDULER</td><td class="!overflow-visible !border-r-transparent"><div class="w-[123px] overflow-hidden tracking-[0.4px]">JOB_PRC_COM_PROCESSA</div></td><td></td><td>36400001</td><td></td><td>38620001</td><td></td><td>10103050</td><td></td><td>1</td><td></td><td>08/01/2025 17:23:52</td><td></td></tr>
        <tr class="d b"><th>8</th><td>08/01/2025 17:26:52</td><td>PRODUCAO</td><td>INSERT</td><td>UNKNOWN</td><td>ORACLE</td><td>DBMS_SCHEDULER</td><td class="!overflow-visible !border-r-transparent"><div class="w-[123px] overflow-hidden tracking-[0.4px]">JOB_PRC_COM_PROCESSA</div></td><td></td><td>36400001</td><td></td><td>38620001</td><td></td><td>10103050</td><td></td><td>2</td><td></td><td>08/01/2025 17:23:52</td><td></td></tr>
        <tr class="d"><th>9</th><td>08/01/2025 17:26:52</td><td>PRODUCAO</td><td>INSERT</td><td>UNKNOWN</td><td>ORACLE</td><td>DBMS_SCHEDULER</td><td class="!overflow-visible !border-r-transparent"><div class="w-[123px] overflow-hidden tracking-[0.4px]">JOB_PRC_COM_PROCESSA</div></td><td></td><td>36400001</td><td></td><td>38620001</td><td></td><td>10103061</td><td></td><td>1</td><td></td><td>08/01/2025 17:23:52</td><td></td></tr>
        <tr class="d b"><th>10</th><td>08/01/2025 17:26:52</td><td>PRODUCAO</td><td>INSERT</td><td>UNKNOWN</td><td>ORACLE</td><td>DBMS_SCHEDULER</td><td class="!overflow-visible !border-r-transparent"><div class="w-[123px] overflow-hidden tracking-[0.4px]">JOB_PRC_COM_PROCESSA</div></td><td></td><td>36400001</td><td></td><td>38620001</td><td></td><td>10103061</td><td></td><td>2</td><td></td><td>08/01/2025 17:23:52</td><td></td></tr>
        <tr class="d"><th>11</th><td>08/01/2025 17:26:52</td><td>PRODUCAO</td><td>INSERT</td><td>UNKNOWN</td><td>ORACLE</td><td>DBMS_SCHEDULER</td><td class="!overflow-visible !border-r-transparent"><div class="w-[123px] overflow-hidden tracking-[0.4px]">JOB_PRC_COM_PROCESSA</div></td><td></td><td>36400001</td><td></td><td>38620001</td><td></td><td>10103061</td><td></td><td>3</td><td></td><td>08/01/2025 17:23:52</td><td></td></tr>
        <tr class="d b"><th>12</th><td>08/01/2025 17:26:52</td><td>PRODUCAO</td><td>INSERT</td><td>UNKNOWN</td><td>ORACLE</td><td>DBMS_SCHEDULER</td><td class="!overflow-visible !border-r-transparent"><div class="w-[123px] overflow-hidden tracking-[0.4px]">JOB_PRC_COM_PROCESSA</div></td><td></td><td>36400001</td><td></td><td>38620001</td><td></td><td>10103067</td><td></td><td>1</td><td></td><td>08/01/2025 17:23:52</td><td></td></tr>
        <tr class="d"><th>13</th><td>08/01/2025 17:26:52</td><td>PRODUCAO</td><td>INSERT</td><td>UNKNOWN</td><td>ORACLE</td><td>DBMS_SCHEDULER</td><td class="!overflow-visible !border-r-transparent"><div class="w-[123px] overflow-hidden tracking-[0.4px]">JOB_PRC_COM_PROCESSA</div></td><td></td><td>36400001</td><td></td><td>38620001</td><td></td><td>10103073</td><td></td><td>1</td><td></td><td>08/01/2025 17:23:52</td><td></td></tr>
        <tr class="d b"><th>14</th><td>08/01/2025 17:26:52</td><td>PRODUCAO</td><td>INSERT</td><td>UNKNOWN</td><td>ORACLE</td><td>DBMS_SCHEDULER</td><td class="!overflow-visible !border-r-transparent"><div class="w-[123px] overflow-hidden tracking-[0.4px]">JOB_PRC_COM_PROCESSA</div></td><td></td><td>36400001</td><td></td><td>38620001</td><td></td><td>10104005</td><td></td><td>1</td><td></td><td>08/01/2025 17:23:52</td><td></td></tr>
        <tr class="d"><th>15</th><td>08/01/2025 17:26:52</td><td>PRODUCAO</td><td>INSERT</td><td>UNKNOWN</td><td>ORACLE</td><td>DBMS_SCHEDULER</td><td class="!overflow-visible !border-r-transparent"><div class="w-[123px] overflow-hidden tracking-[0.4px]">JOB_PRC_COM_PROCESSA</div></td><td></td><td>36400001</td><td></td><td>38620001</td><td></td><td>10105017</td><td></td><td>1</td><td></td><td>08/01/2025 17:23:52</td><td></td></tr>
        <tr class="d b"><th>16</th><td>08/01/2025 17:26:52</td><td>PRODUCAO</td><td>INSERT</td><td>UNKNOWN</td><td>ORACLE</td><td>DBMS_SCHEDULER</td><td class="!overflow-visible !border-r-transparent"><div class="w-[123px] overflow-hidden tracking-[0.4px]">JOB_PRC_COM_PROCESSA</div></td><td></td><td>36400001</td><td></td><td>38620001</td><td></td><td>10201007</td><td></td><td>1</td><td></td><td>08/01/2025 17:23:52</td><td></td></tr>
        <tr class="d"><th>17</th><td>08/01/2025 17:26:52</td><td>PRODUCAO</td><td>INSERT</td><td>UNKNOWN</td><td>ORACLE</td><td>DBMS_SCHEDULER</td><td class="!overflow-visible !border-r-transparent"><div class="w-[123px] overflow-hidden tracking-[0.4px]">JOB_PRC_COM_PROCESSA</div></td><td></td><td>36400001</td><td></td><td>38620001</td><td></td><td>10201007</td><td></td><td>2</td><td></td><td>08/01/2025 17:23:52</td><td></td></tr>
        <tr class="d b"><th>18</th><td>08/01/2025 17:26:52</td><td>PRODUCAO</td><td>INSERT</td><td>UNKNOWN</td><td>ORACLE</td><td>DBMS_SCHEDULER</td><td class="!overflow-visible !border-r-transparent"><div class="w-[123px] overflow-hidden tracking-[0.4px]">JOB_PRC_COM_PROCESSA</div></td><td></td><td>36400001</td><td></td><td>38620001</td><td></td><td>10201007</td><td></td><td>3</td><td></td><td>08/01/2025 17:23:52</td><td></td></tr>
        <tr class="d"><th>19</th><td>08/01/2025 17:26:52</td><td>PRODUCAO</td><td>INSERT</td><td>UNKNOWN</td><td>ORACLE</td><td>DBMS_SCHEDULER</td><td class="!overflow-visible !border-r-transparent"><div class="w-[123px] overflow-hidden tracking-[0.4px]">JOB_PRC_COM_PROCESSA</div></td><td></td><td>36400001</td><td></td><td>38620001</td><td></td><td>10203002</td><td></td><td>1</td><td></td><td>08/01/2025 17:23:52</td><td></td></tr>
        <tr class="d b"><th>20</th><td>08/01/2025 17:26:52</td><td>PRODUCAO</td><td>INSERT</td><td>UNKNOWN</td><td>ORACLE</td><td>DBMS_SCHEDULER</td><td class="!overflow-visible !border-r-transparent"><div class="w-[123px] overflow-hidden tracking-[0.4px]">JOB_PRC_COM_PROCESSA</div></td><td></td><td>36400001</td><td></td><td>38620001</td><td></td><td>10103041</td><td></td><td>1</td><td></td><td>08/01/2025 17:23:52</td><td></td></tr>
        <tr class="e"><th>21</th><td></td><td></td><td></td><td></td><td></td><td></td><td></td><td></td><td></td><td></td><td></td><td></td><td></td><td></td><td></td><td></td><td></td><td></td></tr>
        <tr class="e"><th>22</th><td></td><td></td><td></td><td></td><td></td><td></td><td></td><td></td><td></td><td></td><td></td><td></td><td></td><td></td><td></td><td></td><td></td><td></td></tr>
        <tr class="e"><th class="!bg-[#d2d2d2] !text-[#217346] !border-r-2 !border-r-[#217346]">23</th><td></td><td></td><td></td><td></td><td></td><td></td><td></td><td></td><td></td><td></td><td></td><td></td><td></td><td></td><td></td><td></td><td></td><td></td></tr>
        <tr class="e"><th>24</th><td></td><td></td><td></td><td></td><td></td><td></td><td></td><td></td><td></td><td></td><td></td><td></td><td></td><td></td><td></td><td></td><td></td><td></td></tr>
      </tbody>
    </table>
  </div>
  <!-- vertical scrollbar -->
  <div class="w-[21px] pl-[4px] pt-[2px] flex flex-col">
    <div class="w-[15px] h-[15px] bg-white border border-[#ababab] flex items-center justify-center"><svg class="w-[8px] h-[4px] fill-[#777] rotate-180"><use href="#c"/></svg></div>
    <div class="w-[15px] h-[20px] bg-[#d9d9d9]"></div>
    <div class="w-[15px] h-[420px] bg-white border border-[#ababab]"></div>
    <div class="w-[15px] h-[2px] bg-[#d9d9d9]"></div>
    <div class="w-[15px] h-[14px] bg-white border border-[#ababab] flex items-center justify-center"><svg class="w-[8px] h-[4px] fill-[#777]"><use href="#c"/></svg></div>
  </div>
</main>

<!-- sheet tabs -->
<section class="h-[27px] bg-[#e6e6e6] flex items-start">
  <div class="w-[100px] h-[26px] flex items-center pl-[26px]">
    <svg class="w-[5px] h-[8px]" viewBox="0 0 5 8"><path d="M5 0v8L0 4z" fill="#bdbdbd"/></svg>
    <svg class="w-[5px] h-[8px] ml-[24px]" viewBox="0 0 5 8"><path d="M0 0v8l5-4z" fill="#bdbdbd"/></svg>
  </div>
  <div class="w-[232px] h-[25px] -mt-[2px] bg-white border-x border-[#a6a6a6] border-b-[3px] border-b-[#217346] flex items-center justify-center font-['Lato',sans-serif] font-bold text-[12.700px] tracking-normal text-[#217346] whitespace-nowrap">COM LOG ROMANEIO EMBARQUE</div>
  <svg class="w-[16px] h-[16px] ml-[33px] mt-[4px]" viewBox="0 0 16 16"><circle cx="8" cy="8" r="7.300" fill="none" stroke="#777" stroke-width="1.200"/><path d="M8 4v8M4 8h8" stroke="#777" stroke-width="1.600"/></svg>
  <div class="ml-auto mt-[5px] mr-[23px] flex items-center">
    <div class="w-[14px] h-[14px] bg-white border border-[#ababab] flex items-center justify-center"><svg class="w-[4px] h-[7px]" viewBox="0 0 4 7"><path d="M4 0v7L0 3.500z" fill="#777"/></svg></div>
    <div class="w-[130px] h-[14px] bg-white border border-[#ababab]"></div>
    <div class="w-[348px] h-[14px] bg-[#d9d9d9]"></div>
    <div class="w-[14px] h-[14px] bg-white border border-[#ababab] flex items-center justify-center"><svg class="w-[4px] h-[7px]" viewBox="0 0 4 7"><path d="M0 0v7l4-3.500z" fill="#777"/></svg></div>
  </div>
</section>

<!-- status bar -->
<footer class="h-[21px] bg-[#f2f2f2] border-t border-[#c8c8c8] flex items-center pl-[7px] text-[11px] text-[#555]">
  <span>Pronto</span>
  <div class="ml-auto flex items-center h-full">
    <div class="w-[38px] h-[20px] bg-[#cfcfcf] flex items-center justify-center"><svg class="w-[13px] h-[12px]" viewBox="0 0 13 12"><path d="M.5.500h12v11H.5zM.5 4h12M.5 8h12M4.500.5v11M8.500.5v11" fill="none" stroke="#666"/></svg></div>
    <svg class="w-[14px] h-[13px] ml-[12px]" viewBox="0 0 14 13"><path d="M.5.500h13v12H.5zM3.500 3.500h7v6h-7zM5 5.500h4M5 7.500h4" fill="none" stroke="#666"/></svg>
    <svg class="w-[14px] h-[13px] ml-[24px]" viewBox="0 0 14 13"><path d="M.5.500h13v12H.5zM.5 9h8V.5M5 .5V9" fill="none" stroke="#666"/></svg>
    <svg class="w-[7px] h-[7px] ml-[17px]" viewBox="0 0 7 7"><path d="M0 3.500h7" stroke="#666" stroke-width="2"/></svg>
    <div class="ml-[4px] w-[100px] h-[1px] bg-[#999] relative"><div class="absolute left-[48px] -top-[5px] w-[4px] h-[11px] bg-[#666]"></div></div>
    <svg class="w-[8px] h-[8px] ml-[5px]" viewBox="0 0 8 8"><path d="M0 4h8M4 0v8" stroke="#666" stroke-width="2"/></svg>
    <span class="w-[49px] text-right pr-[7px] text-[11px]">100%</span>
  </div>
</footer>
</body>
</html>
